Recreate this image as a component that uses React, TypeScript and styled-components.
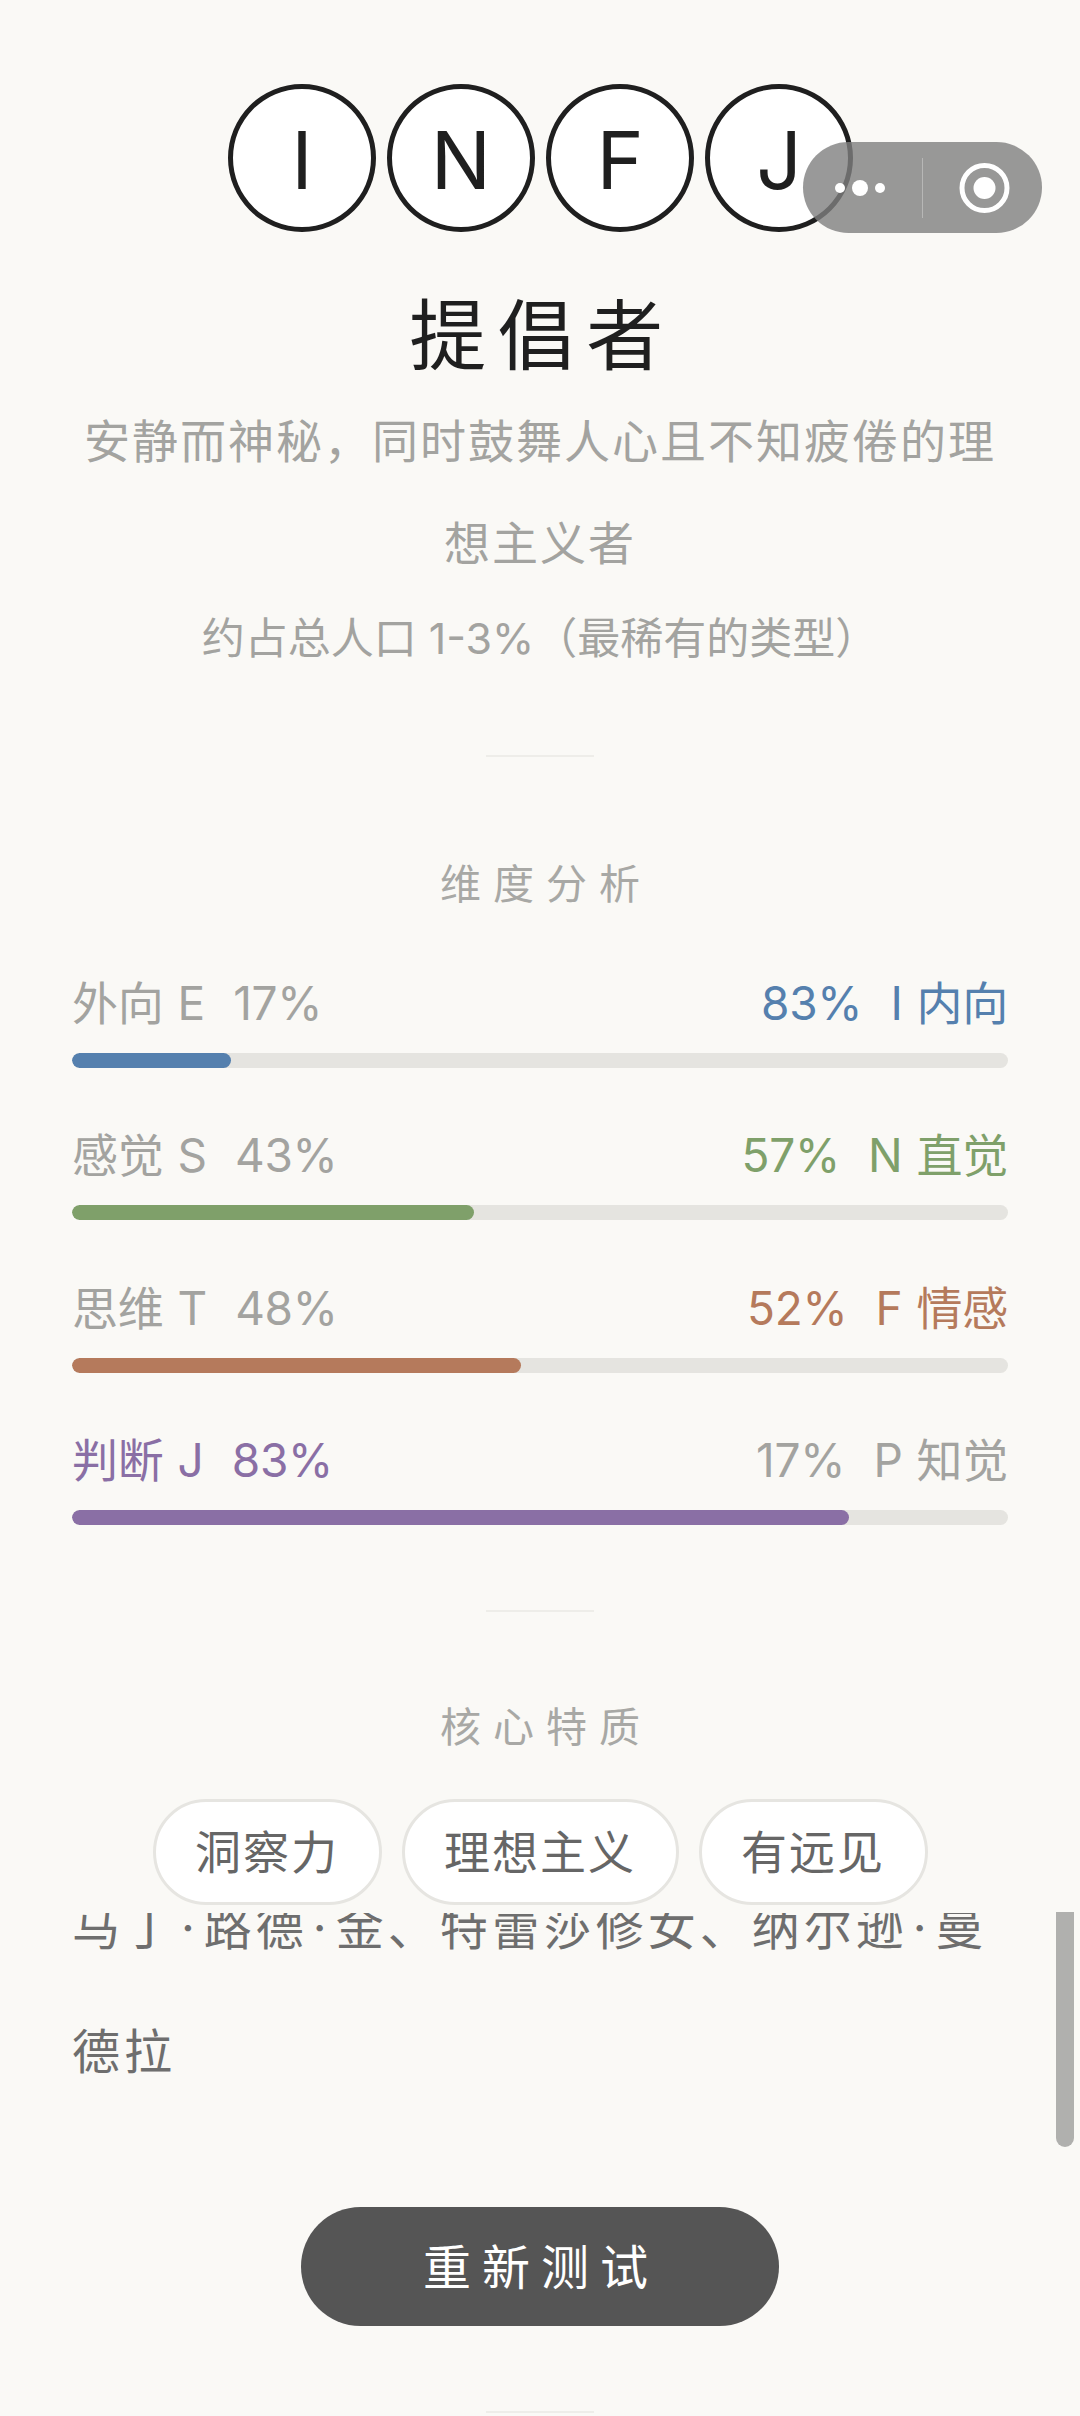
import styled, { createGlobalStyle } from "styled-components";

const GlobalStyle = createGlobalStyle`
  html, body {
    margin: 0;
    padding: 0;
    background: #faf9f6;
  }

  * {
    box-sizing: border-box;
  }
`;

const Page = styled.main`
  position: relative;
  width: 1080px;
  height: 2416px;
  overflow: hidden;
  padding-top: 84px;
  background: #faf9f6;
  font-family: "Inter", "Noto Sans CJK SC", sans-serif;
  font-weight: 400;
`;

const Letters = styled.div`
  display: flex;
  justify-content: center;
  gap: 11.5px;
  padding-left: 1px;
`;

const Letter = styled.div`
  width: 147.5px;
  height: 148px;
  border: 5px solid #1f1f1f;
  border-radius: 50%;
  background: #fff;
  color: #1f1f1f;
  font-size: 80px;
  font-weight: 400;
  line-height: 142px;
  text-align: center;
`;

const Capsule = styled.div`
  position: absolute;
  top: 142px;
  left: 803px;
  width: 239px;
  height: 91px;
  display: flex;
  align-items: center;
  border-radius: 46px;
  background: rgba(128, 128, 128, 0.8);
`;

const CapsuleSide = styled.div<{ $shift: number }>`
  flex: 1;
  display: flex;
  align-items: center;
  justify-content: center;
  transform: translateX(${(p) => p.$shift}px);
`;

const CapsuleLine = styled.div`
  width: 1px;
  height: 60px;
  background: rgba(255, 255, 255, 0.3);
`;

const Title = styled.h1`
  margin: 54px 0 0;
  color: #1f1f1f;
  font-size: 77px;
  font-weight: 400;
  line-height: 100px;
  letter-spacing: 11.5px;
  text-indent: 4px;
  text-align: center;
`;

const Subtitle = styled.p`
  margin: 4px 72px 0;
  color: #a3a3a0;
  font-size: 46px;
  line-height: 102px;
  letter-spacing: 2px;
  text-align: center;
`;

const Share = styled.p`
  margin: 14px 0 0;
  color: #a3a3a0;
  font-size: 43px;
  line-height: 60px;
  text-align: center;
`;

const Divider = styled.div<{ $top: number }>`
  width: 108px;
  height: 2px;
  margin: ${(p) => p.$top}px auto 0;
  background: #eeede9;
`;

const SectionTitle = styled.h2<{ $top: number }>`
  margin: ${(p) => p.$top}px 0 0;
  color: #a8a8a5;
  font-size: 41px;
  font-weight: 400;
  line-height: 56px;
  letter-spacing: 12px;
  text-indent: 12px;
  text-align: center;
`;

const Dimensions = styled.section`
  display: flex;
  flex-direction: column;
  gap: 57.4px;
  margin: 61px 72px 0;
`;

const DimensionRow = styled.div`
  display: flex;
  flex-direction: column;
  gap: 20px;
`;

const DimensionLabels = styled.div`
  display: flex;
  justify-content: space-between;
  font-size: 46px;
  line-height: 60px;
  letter-spacing: -0.3px;
  word-spacing: 1.5px;
  white-space: pre;
`;

const Side = styled.span<{ $color?: string }>`
  color: ${(p) => p.$color ?? "#a3a3a0"};
`;

const Track = styled.div`
  height: 15px;
  border-radius: 8px;
  overflow: hidden;
  background: #e5e4e0;
`;

const Fill = styled.div<{ $color: string }>`
  height: 100%;
  border-radius: 8px;
  background: ${(p) => p.$color};
`;

const Chips = styled.div`
  display: flex;
  justify-content: center;
  gap: 20px;
  margin-top: 44px;
`;

const Chip = styled.div`
  height: 106px;
  padding: 0 39.5px;
  border: 3px solid #e6e5e1;
  border-radius: 53px;
  background: #fff;
  color: #666;
  font-size: 46px;
  line-height: 100px;
  letter-spacing: 2px;
`;

const PeopleClip = styled.div`
  height: 203px;
  margin-top: 8px;
  padding: 0 72px;
  overflow: hidden;
`;

const People = styled.p`
  margin: -47px 0 0;
  color: #6e6e6e;
  font-size: 48px;
  line-height: 124px;
  letter-spacing: 4px;
`;

const NameDot = styled.span`
  padding: 0 5px;
`;

const RetryButton = styled.button`
  display: block;
  width: 478px;
  height: 119px;
  margin: 91px auto 0;
  padding: 0 0 5px;
  border: none;
  border-radius: 60px;
  background: #555;
  color: #fff;
  font-family: inherit;
  font-size: 48px;
  font-weight: 400;
  letter-spacing: 11px;
  text-indent: 2px;
`;

const Scrollbar = styled.div`
  position: absolute;
  top: 1912px;
  left: 1056px;
  width: 18px;
  height: 235px;
  border-radius: 0 0 9px 9px;
  background: #b0b0ae;
`;

const dimensions = [
  { left: "外向 E  17%", right: "83%  I 内向", value: 17, color: "#5580ae", active: "right" },
  { left: "感觉 S  43%", right: "57%  N 直觉", value: 43, color: "#7fa06a", active: "right" },
  { left: "思维 T  48%", right: "52%  F 情感", value: 48, color: "#b57a5c", active: "right" },
  { left: "判断 J  83%", right: "17%  P 知觉", value: 83, color: "#8a6fa5", active: "left" },
];

export default function App() {
  return (
    <Page>
      <GlobalStyle />

      <Letters>
        {["I", "N", "F", "J"].map((letter) => (
          <Letter key={letter}>{letter}</Letter>
        ))}
      </Letters>

      <Capsule>
        <CapsuleSide $shift={-3}>
          <svg width="52" height="20" viewBox="0 0 52 20">
            <circle cx="6" cy="10" r="5" fill="#fff" />
            <circle cx="26" cy="10" r="8" fill="#fff" />
            <circle cx="46" cy="10" r="5" fill="#fff" />
          </svg>
        </CapsuleSide>
        <CapsuleLine />
        <CapsuleSide $shift={1.5}>
          <svg width="52" height="52" viewBox="0 0 52 52">
            <circle cx="26" cy="26" r="22.5" fill="none" stroke="#fff" strokeWidth="5" />
            <circle cx="26" cy="26" r="11" fill="#fff" />
          </svg>
        </CapsuleSide>
      </Capsule>

      <Title>提倡者</Title>
      <Subtitle>安静而神秘，同时鼓舞人心且不知疲倦的理想主义者</Subtitle>
      <Share>约占总人口 1-3%（最稀有的类型）</Share>

      <Divider $top={87} />
      <SectionTitle $top={99}>维度分析</SectionTitle>

      <Dimensions>
        {dimensions.map((d) => (
          <DimensionRow key={d.left}>
            <DimensionLabels>
              <Side $color={d.active === "left" ? d.color : undefined}>{d.left}</Side>
              <Side $color={d.active === "right" ? d.color : undefined}>{d.right}</Side>
            </DimensionLabels>
            <Track>
              <Fill $color={d.color} style={{ width: `${d.value}%` }} />
            </Track>
          </DimensionRow>
        ))}
      </Dimensions>

      <Divider $top={85} />
      <SectionTitle $top={87}>核心特质</SectionTitle>

      <Chips>
        <Chip>洞察力</Chip>
        <Chip>理想主义</Chip>
        <Chip>有远见</Chip>
      </Chips>

      <PeopleClip>
        <People>
          马丁<NameDot>·</NameDot>路德<NameDot>·</NameDot>金、特蕾莎修女、纳尔逊<NameDot>·</NameDot>曼德拉
        </People>
      </PeopleClip>

      <RetryButton>重新测试</RetryButton>

      <Divider $top={85} />
      <Scrollbar />
    </Page>
  );
}
